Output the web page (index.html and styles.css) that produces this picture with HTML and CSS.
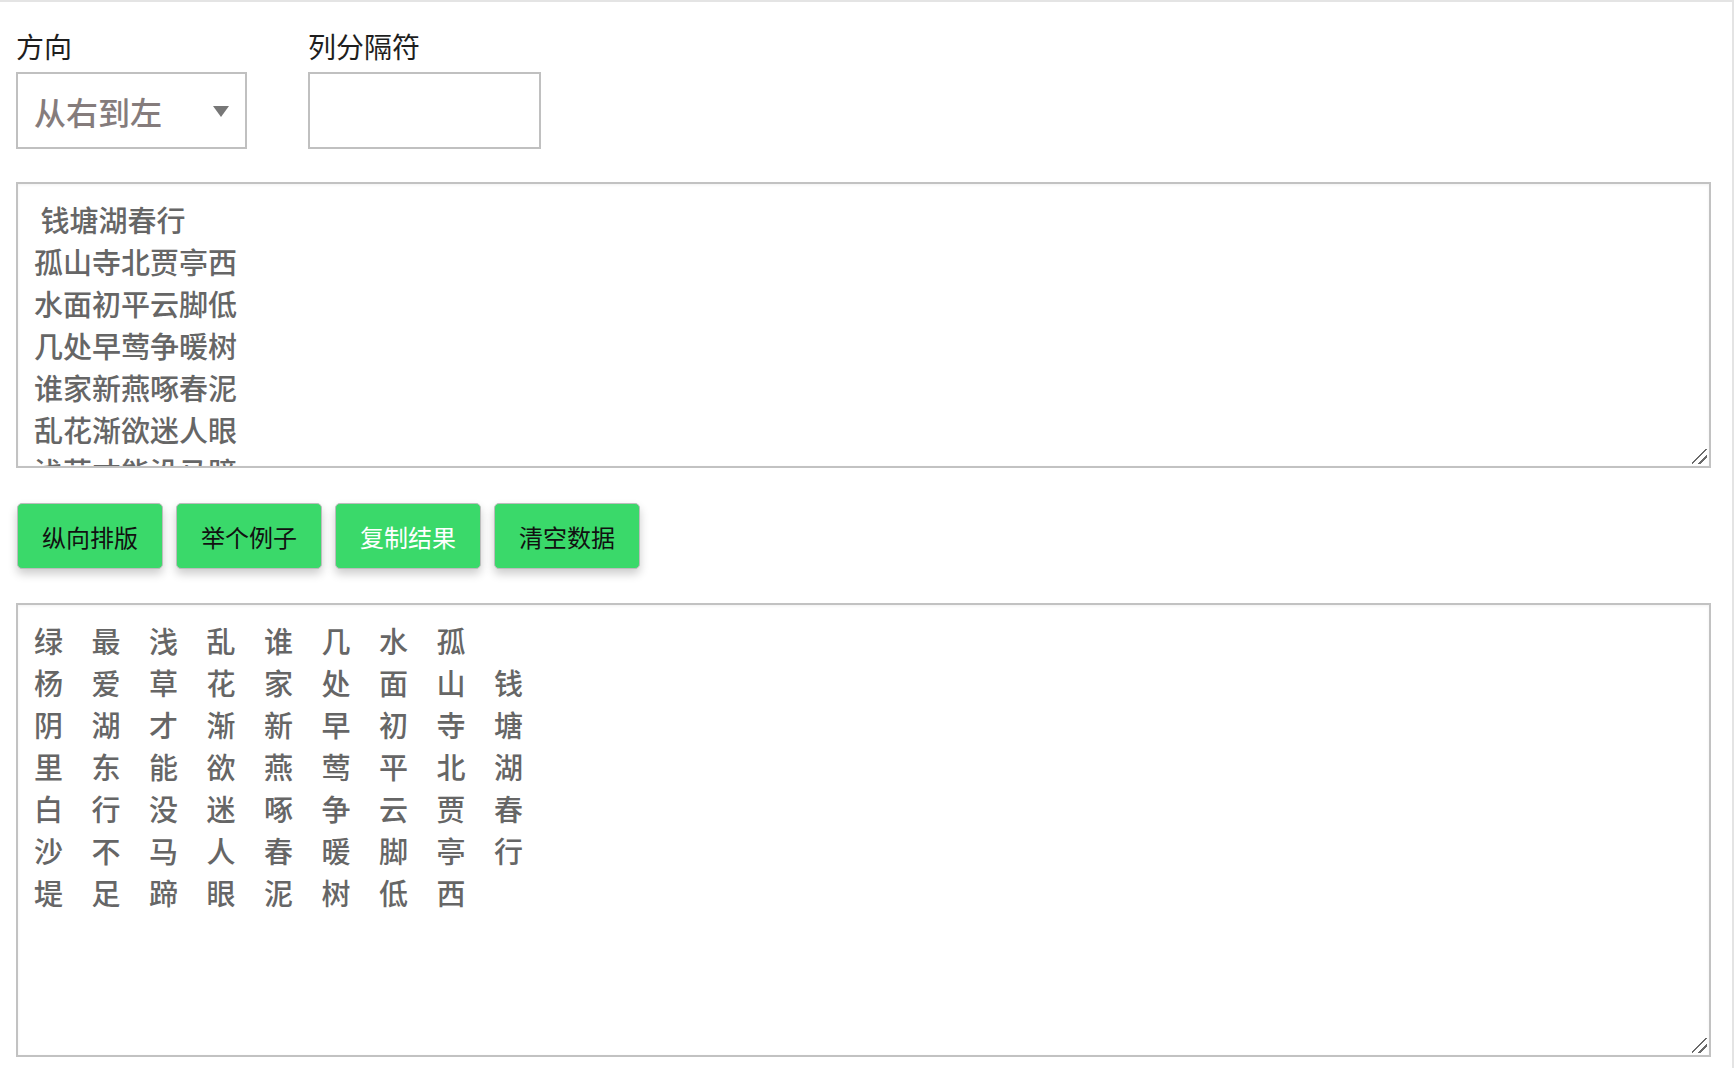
FILE: index.html
```html
<!DOCTYPE html>
<html>
<head>
    <meta charset="utf-8">
    <title>纵向排版</title>
    <link rel="stylesheet" href="styles.css">
</head>
<body>
    <div class="page">
        <div class="options">
            <div class="field">
                <label for="direction">方向</label>
                <div class="select-wrap">
                    <select id="direction">
                        <option>从右到左</option>
                        <option>从左到右</option>
                    </select>
                </div>
            </div>
            <div class="field">
                <label for="separator">列分隔符</label>
                <input type="text" id="separator" />
            </div>
        </div>

        <div class="area area-source">
            <textarea id="source" class="source"> 钱塘湖春行
孤山寺北贾亭西
水面初平云脚低
几处早莺争暖树
谁家新燕啄春泥
乱花渐欲迷人眼
浅草才能没马蹄
最爱湖东行不足
绿杨阴里白沙堤</textarea>
        </div>

        <div class="actions">
            <button class="btn">纵向排版</button>
            <button class="btn">举个例子</button>
            <button class="btn btn-light">复制结果</button>
            <button class="btn">清空数据</button>
        </div>

        <div class="area area-result">
            <textarea id="result" class="result">绿　最　浅　乱　谁　几　水　孤　
杨　爱　草　花　家　处　面　山　钱
阴　湖　才　渐　新　早　初　寺　塘
里　东　能　欲　燕　莺　平　北　湖
白　行　没　迷　啄　争　云　贾　春
沙　不　马　人　春　暖　脚　亭　行
堤　足　蹄　眼　泥　树　低　西</textarea>
        </div>
    </div>
</body>
</html>
```

FILE: styles.css
```css
html, body {
    margin: 0;
    background: #fff;
}
body {
    font-family: "Noto Sans CJK SC", "Noto Sans", sans-serif;
    color: #222;
}
.page {
    box-sizing: border-box;
    height: 1068px;
    border-top: 2px solid #e4e4e4;
    border-right: 2px solid #e4e4e4;
    padding: 23px 21px 0 16px;
}
.options {
    display: flex;
    gap: 61px;
}
.field label {
    display: block;
    font-size: 28px;
    line-height: 42px;
    margin-bottom: 5px;
    color: #1e1e1e;
}
.select-wrap {
    position: relative;
    width: 231px;
}
.select-wrap::after {
    content: "";
    position: absolute;
    right: 18px;
    top: 34px;
    border-left: 8px solid transparent;
    border-right: 8px solid transparent;
    border-top: 11px solid #777;
    pointer-events: none;
}
select {
    -webkit-appearance: none;
    appearance: none;
    box-sizing: border-box;
    width: 231px;
    height: 77px;
    padding: 0 0 0 16px;
    border: 2px solid #c0c0c0;
    border-radius: 0;
    background: #fff;
    font-family: inherit;
    font-size: 32px;
    font-weight: 500;
    color: #857c7c;
    outline: none;
}
input {
    box-sizing: border-box;
    width: 233px;
    height: 77px;
    padding: 0 16px;
    border: 2px solid #c0c0c0;
    border-radius: 0;
    font-family: inherit;
    font-size: 28px;
    outline: none;
}
.area {
    position: relative;
}
/* resize grip drawn over the corner */
.area::after {
    content: "";
    position: absolute;
    right: 4px;
    bottom: 4px;
    width: 15px;
    height: 15px;
    background: linear-gradient(135deg,
        transparent 44%, #6a6a6a 44%, #6a6a6a 52%, transparent 52%,
        transparent 70%, #6a6a6a 70%, #6a6a6a 78%, transparent 78%);
    pointer-events: none;
}
textarea {
    display: block;
    box-sizing: border-box;
    width: 100%;
    margin: 0;
    padding: 14px 16px 16px;
    border: 2px solid #c2c2c2;
    border-radius: 0;
    box-shadow: inset 0 1px 3px rgba(0, 0, 0, 0.06);
    font-family: inherit;
    font-size: 29px;
    font-weight: 500;
    line-height: 42px;
    color: #666;
    outline: none;
    resize: none;
}
.area-source {
    margin-top: 33px;
}
.source {
    height: 286px;
}
.area-result {
    margin-top: 34px;
}
.result {
    height: 454px;
    letter-spacing: -0.25px;
}
.actions {
    display: flex;
    gap: 13px;
    margin-top: 35px;
    padding-left: 1px;
}
.btn {
    width: 146px;
    height: 66px;
    padding: 0;
    background-color: #3ad96a;
    color: #111;
    border: 1px solid #bcbcbc;
    border-radius: 5px;
    box-shadow: 0 5px 10px rgba(0, 0, 0, 0.2);
    font-family: inherit;
    font-size: 24px;
    cursor: pointer;
}
.btn-light {
    color: #fff;
}
```
